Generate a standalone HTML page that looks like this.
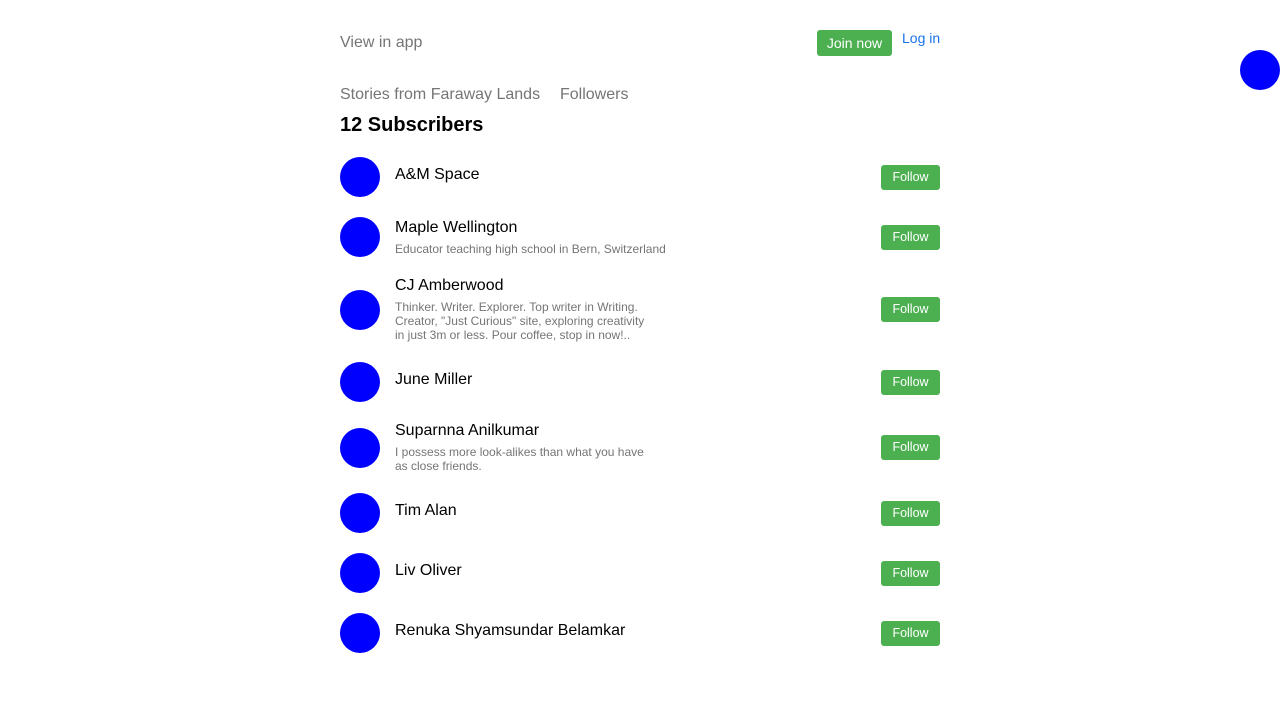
<!DOCTYPE html>
<html><head><meta charset="utf-8"><style>
body{margin:0;width:1280px;height:720px;background:#fff;font-family:"Liberation Sans",Arial,sans-serif;position:relative;overflow:hidden}
.a{position:absolute;white-space:nowrap}
.av{position:absolute;left:340px;width:40px;height:40px;border-radius:50%;background:#00f}
.n{position:absolute;left:395px;font-size:16px;line-height:18px;color:#000;white-space:nowrap}
.d{position:absolute;left:395px;font-size:12px;line-height:14px;color:#757575;white-space:nowrap}
.f{position:absolute;left:881px;width:59px;height:25px;background:#4caf50;color:#fff;border-radius:3px;font-size:12.5px;line-height:25px;text-align:center}
</style></head><body>
<div class="a" style="left:340px;top:34px;font-size:16px;line-height:18px;color:#757575">View in app</div>
<div class="a" style="left:817px;top:30px;width:75px;height:26px;background:#4caf50;border-radius:3px;color:#fff;font-size:14px;line-height:26px;text-align:center">Join now</div>
<div class="a" style="left:902px;top:30px;font-size:14px;line-height:16px;color:#1a73e8">Log in</div>
<div class="a" style="left:1240px;top:50px;width:40px;height:40px;border-radius:50%;background:#00f"></div>
<div class="a" style="left:340px;top:86px;font-size:16px;line-height:18px;color:#757575">Stories from Faraway Lands</div>
<div class="a" style="left:560px;top:86px;font-size:16px;line-height:18px;color:#757575">Followers</div>
<div class="a" style="left:340px;top:114px;font-size:20px;line-height:22px;font-weight:bold;color:#000">12 Subscribers</div>

<div class="av" style="top:157px"></div><div class="n" style="top:166px">A&amp;M Space</div><div class="f" style="top:165px">Follow</div>

<div class="av" style="top:217px"></div><div class="n" style="top:219px">Maple Wellington</div><div class="d" style="top:242px">Educator teaching high school in Bern, Switzerland</div><div class="f" style="top:225px">Follow</div>

<div class="av" style="top:290px"></div><div class="n" style="top:277px">CJ Amberwood</div><div class="d" style="top:300px">Thinker. Writer. Explorer. Top writer in Writing.<br>Creator, "Just Curious" site, exploring creativity<br>in just 3m or less. Pour coffee, stop in now!..</div><div class="f" style="top:297px">Follow</div>

<div class="av" style="top:362px"></div><div class="n" style="top:371px">June Miller</div><div class="f" style="top:370px">Follow</div>

<div class="av" style="top:428px"></div><div class="n" style="top:422px">Suparnna Anilkumar</div><div class="d" style="top:445px">I possess more look-alikes than what you have<br>as close friends.</div><div class="f" style="top:435px">Follow</div>

<div class="av" style="top:493px"></div><div class="n" style="top:502px">Tim Alan</div><div class="f" style="top:501px">Follow</div>

<div class="av" style="top:553px"></div><div class="n" style="top:562px">Liv Oliver</div><div class="f" style="top:561px">Follow</div>

<div class="av" style="top:613px"></div><div class="n" style="top:622px">Renuka Shyamsundar Belamkar</div><div class="f" style="top:621px">Follow</div>
</body></html>
